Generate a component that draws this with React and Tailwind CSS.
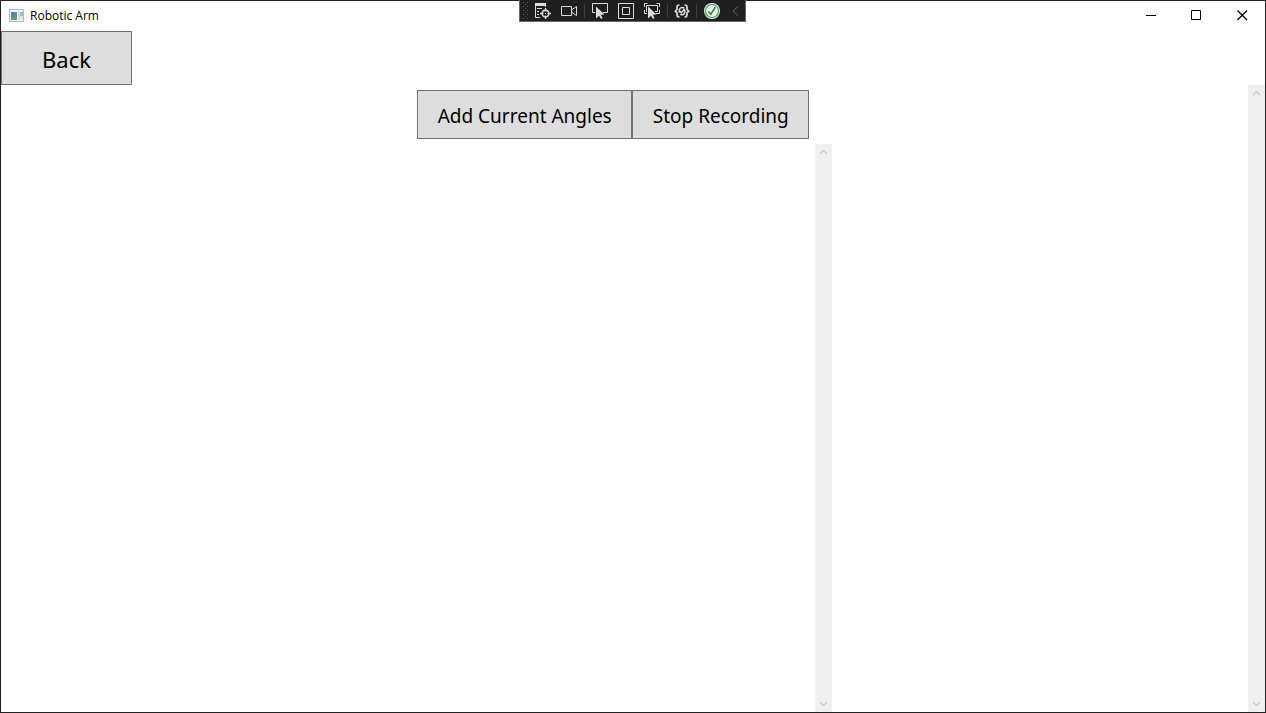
import React from "react";

function ToolButton({ label, className = "w-[26px]", children }) {
  return (
    <button type="button" aria-label={label} className={`flex h-full items-center justify-center ${className}`}>
      {children}
    </button>
  );
}

function Divider() {
  return (
    <span className="flex h-full w-[5px] items-center justify-center">
      <span className="h-3.5 w-px bg-[#3f3f42]" />
    </span>
  );
}

const line = { fill: "none", stroke: "#dcdcdc", strokeWidth: 1 };

function Grip() {
  const dots = [];
  for (let y = 0; y < 9; y += 1) {
    for (let x = y % 2; x < 3; x += 2) dots.push([x * 2, y * 2]);
  }
  return (
    <svg width="6" height="18" viewBox="0 0 6 18" shapeRendering="crispEdges" aria-hidden="true">
      {dots.map(([x, y]) => (
        <rect key={`${x}-${y}`} x={x} y={y} width="1" height="1" fill="#5b5b5e" />
      ))}
    </svg>
  );
}

function TreeIcon() {
  return (
    <svg width="18" height="18" viewBox="0 0 18 18" aria-hidden="true">
      <path d="M1 1h11v3H1z" fill="#dcdcdc" />
      <path d="M1.500 3v12.500H6M11.500 3v2M3 6.500h5M3 9.500h2M3 12.500h2" {...line} />
      <circle cx="11.500" cy="11.500" r="3.300" {...line} strokeWidth="1.400" />
      <path d="M11.500 6v3.500M11.500 13.500V17M6 11.500h3.500M13.500 11.500H17" {...line} strokeWidth="1.300" />
      <rect x="11" y="11" width="1" height="1" fill="#dcdcdc" />
    </svg>
  );
}

function CameraIcon() {
  return (
    <svg width="18" height="18" viewBox="0 0 18 18" aria-hidden="true">
      <path d="M1.500 4.500h10v9h-10zM12 7.500l4.500-3v9L12 10.500" {...line} />
    </svg>
  );
}

function Pointer() {
  return <path d="M5 4.500v12l3-2.800 2 3.300 1.500-1-1.700-3.200 3.700-.300z" fill="#dcdcdc" />;
}

function SelectIcon() {
  return (
    <svg width="18" height="18" viewBox="0 0 18 18" aria-hidden="true">
      <path d="M4 10.500H1.500v-9h15v9H12" {...line} />
      <Pointer />
    </svg>
  );
}

function LayoutIcon() {
  return (
    <svg width="18" height="18" viewBox="0 0 18 18" aria-hidden="true">
      <path d="M1.500 1.500h15v15h-15zM5.500 5.500h7v7h-7z" {...line} />
    </svg>
  );
}

function TrackIcon() {
  return (
    <svg width="18" height="18" viewBox="0 0 18 18" aria-hidden="true">
      <path d="M4.500 1.500h-3V5M13.500 1.500h3V5M1.500 8v3.500H4M16.500 8v3.500H13M4 9.500H3.500v-6h11v6H12" {...line} />
      <Pointer />
    </svg>
  );
}

function ReloadIcon() {
  return (
    <svg width="18" height="18" viewBox="0 0 18 18" aria-hidden="true">
      <path d="M6.500 3C4.500 3 4 3.700 4 5v2.500L2.300 9.200 4 10.800V13c0 1.300.500 2 2.500 2M11.500 3c2 0 2.500.700 2.500 2v2.500l1.700 1.700-1.700 1.600V13c0 1.300-.500 2-2.500 2" {...line} strokeWidth="1.700" />
      <path d="M6.300 10.800V8c.500-2.500 3.300-3.300 5-1.600M11.800 7.600v2.900c-.500 2.300-3 3-4.700 1.700M6.800 9l1.700 1.700 3-3.700" {...line} strokeWidth="1.500" />
    </svg>
  );
}

function CheckIcon() {
  return (
    <svg width="18" height="18" viewBox="0 0 18 18" aria-hidden="true">
      <circle cx="9" cy="9" r="8" fill="#f2f2f2" />
      <circle cx="9" cy="9" r="6.500" fill="#f7fff7" stroke="#37a447" strokeWidth="1.200" />
      <path d="M5.300 9.300l2.500 3 4.600-7" fill="none" stroke="#279237" strokeWidth="1.700" />
    </svg>
  );
}

function DebugToolbar() {
  return (
    <div className="absolute inset-x-0 -top-px flex justify-center pr-px">
      <div role="toolbar" aria-label="Debug tools" className="flex h-[22px] w-[227px] items-center border-x border-b border-[#67676a] bg-[#1f1f1f] pt-px">
        <span className="flex w-2.5 justify-end pr-px"><Grip /></span>
        <ToolButton label="Go to Live Visual Tree"><TreeIcon /></ToolButton>
        <ToolButton label="Show in preview"><CameraIcon /></ToolButton>
        <Divider />
        <ToolButton label="Select element"><SelectIcon /></ToolButton>
        <ToolButton label="Display layout adorners"><LayoutIcon /></ToolButton>
        <ToolButton label="Track focused element"><TrackIcon /></ToolButton>
        <Divider />
        <ToolButton label="Binding failures" className="w-6"><ReloadIcon /></ToolButton>
        <Divider />
        <ToolButton label="Hot Reload"><CheckIcon /></ToolButton>
        <ToolButton label="Collapse toolbar" className="w-5">
          <svg width="8" height="10" viewBox="0 0 8 10" aria-hidden="true">
            <path d="M7 .500L2 5l5 4.500" fill="none" stroke="#656568" />
          </svg>
        </ToolButton>
      </div>
    </div>
  );
}

function CaptionButton({ label, children }) {
  return (
    <button type="button" aria-label={label} className="flex h-full w-[46px] items-center justify-center pb-px pl-px">
      <svg width="11" height="11" viewBox="0 0 11 11" fill="none" stroke="#000" aria-hidden="true">
        {children}
      </svg>
    </button>
  );
}

function ScrollBar() {
  return (
    <div className="flex w-[17px] shrink-0 flex-col items-center justify-between bg-[#f0f0f0] py-[5px]">
      <svg width="9" height="6" viewBox="0 0 9 6" fill="none" stroke="#cdcdcd" strokeWidth="1.500" aria-hidden="true">
        <path d="M1 5l3.500-3.500L8 5" />
      </svg>
      <svg width="9" height="6" viewBox="0 0 9 6" fill="none" stroke="#cdcdcd" strokeWidth="1.500" aria-hidden="true">
        <path d="M1 1l3.500 3.500L8 1" />
      </svg>
    </div>
  );
}

const buttonStyle = "border border-[#707070] bg-[#dddddd] pt-0.5 text-black";
const recordButtonStyle = `${buttonStyle} h-[49px] whitespace-nowrap pl-5 pr-[19px] text-[19px] leading-7`;

export default function App() {
  return (
    <div className="relative flex h-screen flex-col border border-[#222222] bg-white font-['Noto_Sans',sans-serif] text-black">
      <header className="flex h-[30px] shrink-0 items-center justify-between">
        <div className="flex items-center gap-[5px] pl-2">
          <svg width="16" height="14" viewBox="0 0 16 14" aria-hidden="true">
            <defs>
              <linearGradient id="app-pane" x1="0" y1="0" x2="1" y2="1">
                <stop offset="0" stopColor="#4c79a5" />
                <stop offset="1" stopColor="#62ad8b" />
              </linearGradient>
            </defs>
            <rect x=".5" y=".5" width="14" height="12" fill="#f3f3f5" stroke="#b4b7bd" />
            <rect x="2" y="3" width="6" height="8" fill="url(#app-pane)" />
            <rect x="9" y="3" width="2" height="8" fill="#d9dde5" />
            <rect x="11" y="3" width="3" height="4" fill="#9cc1c0" />
            <rect x="11" y="7" width="3" height="4" fill="#e2e5ea" />
          </svg>
          <h1 className="font-['Open_Sans',sans-serif] text-[12px] leading-4">Robotic Arm</h1>
        </div>
        <div className="flex h-full">
          <CaptionButton label="Minimize"><path d="M1 5.500h10" /></CaptionButton>
          <CaptionButton label="Maximize"><path d="M.500.500h9v9h-9z" /></CaptionButton>
          <CaptionButton label="Close"><path d="M.500.500l9.500 9.500M10 .500L.500 10" strokeWidth="1.300" /></CaptionButton>
        </div>
      </header>

      <button type="button" className={`${buttonStyle} h-[54px] shrink-0 self-start px-10 text-[22px] leading-8`}>
        Back
      </button>

      <main className="flex min-h-0 flex-1">
        <div className="grid min-w-0 flex-1 grid-cols-3">
          <section aria-label="Recording" className="col-start-2 flex min-h-0 flex-col">
            <div className="flex py-[5px]">
              <button type="button" className={recordButtonStyle}>
                Add Current Angles
              </button>
              <button type="button" className={recordButtonStyle}>
                Stop Recording
              </button>
            </div>
            <div className="flex min-h-0 flex-1 justify-end">
              <ScrollBar />
            </div>
          </section>
        </div>
        <ScrollBar />
      </main>

      <DebugToolbar />
    </div>
  );
}
